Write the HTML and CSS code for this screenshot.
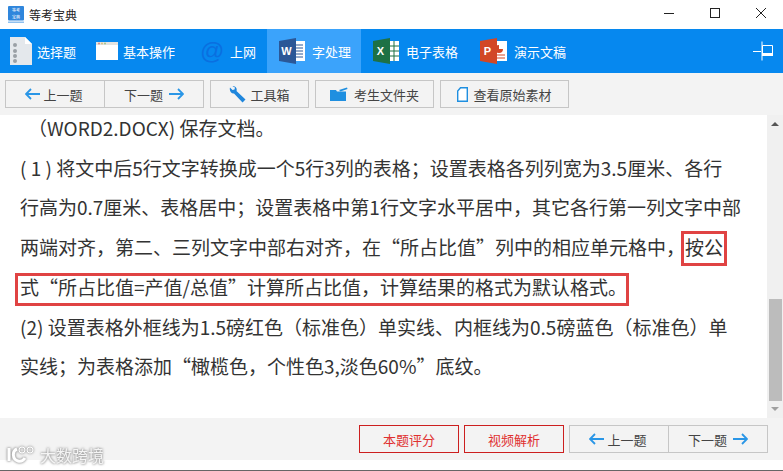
FILE: index.html
```html
<!DOCTYPE html>
<html lang="zh-CN">
<head>
  <meta charset="UTF-8">
  <meta name="viewport" content="width=device-width, initial-scale=1.0">
  <title>等考宝典</title>
  <link rel="stylesheet" href="styles.css">
</head>
<body>
  <div class="app">
    <!-- 标题栏 -->
    <div class="titlebar">
      <svg class="app-icon" viewBox="0 0 16 17">
        <rect width="16" height="14.5" rx="1" fill="#2f86dc"/>
        <rect y="15.5" width="16" height="1.5" fill="#8fc0ee"/>
        <text x="8" y="6" text-anchor="middle" class="app-icon-text">等考</text>
        <text x="8" y="12.5" text-anchor="middle" class="app-icon-text">宝典</text>
      </svg>
      <span class="app-name">等考宝典</span>
      <div class="win-controls">
        <svg class="win-btn" viewBox="0 0 46 29"><path d="M18 13.5h10" stroke="#222" fill="none"/></svg>
        <svg class="win-btn" viewBox="0 0 46 29"><rect x="18.5" y="8.5" width="9" height="9" stroke="#222" fill="none"/></svg>
        <svg class="win-btn" viewBox="0 0 46 29"><path d="M18 8l10 10M28 8l-10 10" stroke="#222" fill="none"/></svg>
      </div>
    </div>

    <!-- 主导航 -->
    <div class="nav">
      <div class="nav-item">
        <svg class="nav-icon" width="22" height="28" viewBox="0 0 22 28">
          <path d="M0 0h15l7 7v21H0z" fill="#e4e8ec"/>
          <path d="M15 0l7 7h-7z" fill="#fff"/>
          <g fill="#9aa0a6"><circle cx="5" cy="8" r="2"/><circle cx="5" cy="14" r="2"/><circle cx="5" cy="19" r="2"/><circle cx="5" cy="24" r="2"/></g>
        </svg>
        <span>选择题</span>
      </div>
      <div class="nav-item">
        <svg class="nav-icon" width="22" height="18" viewBox="0 0 22 18">
          <rect width="22" height="18" fill="#fff"/>
          <rect width="22" height="3" fill="#e3e3e0"/>
          <circle cx="3" cy="1.5" r="1" fill="#d98a80"/><circle cx="6" cy="1.5" r="1" fill="#d9c080"/><circle cx="9" cy="1.5" r="1" fill="#9cc58c"/>
        </svg>
        <span>基本操作</span>
      </div>
      <div class="nav-item nav-item-web">
        <span class="at-icon">@</span>
        <span>上网</span>
      </div>
      <div class="nav-item nav-item-office active">
        <svg class="nav-icon" width="26" height="26" viewBox="0 0 26 26">
          <rect x="12" y="3" width="14" height="20" fill="#fff"/>
          <path d="M15 7h9M15 10h9M15 13h9M15 16h9M15 19h9" stroke="#2b5797" fill="none"/>
          <path d="M0 3l17-3v26L0 23z" fill="#2b5797"/>
          <text x="7.5" y="17" text-anchor="middle" class="office-letter">W</text>
        </svg>
        <span>字处理</span>
      </div>
      <div class="nav-item nav-item-office">
        <svg class="nav-icon" width="26" height="26" viewBox="0 0 26 26">
          <rect x="12" y="3" width="14" height="20" fill="#fff"/>
          <path d="M16 3v20M21 3v20M13 8h13M13 13h13M13 18h13" stroke="#1e7145" fill="none"/>
          <path d="M0 3l17-3v26L0 23z" fill="#1e7145"/>
          <text x="7.5" y="17" text-anchor="middle" class="office-letter">X</text>
        </svg>
        <span>电子表格</span>
      </div>
      <div class="nav-item nav-item-office">
        <svg class="nav-icon" width="27" height="26" viewBox="0 0 27 26">
          <rect x="12" y="3" width="15" height="20" fill="#fff"/>
          <path d="M19 7a4 4 0 1 0 4 4h-4z" fill="#d24726"/>
          <path d="M15 17h10M15 20h10" stroke="#d24726" fill="none"/>
          <path d="M0 3l17-3v26L0 23z" fill="#d24726"/>
          <text x="7.5" y="17" text-anchor="middle" class="office-letter">P</text>
        </svg>
        <span>演示文稿</span>
      </div>
      <svg class="pin" width="21" height="20" viewBox="0 0 21 20">
        <path d="M0 10.500h8M9 .5v19" stroke="#fff" fill="none"/>
        <path d="M9.500 4.500h10v10h-10z" stroke="#fff" fill="none"/>
        <rect x="9" y="12" width="11" height="3" fill="#fff"/>
      </svg>
    </div>

    <!-- 工具栏 -->
    <div class="toolbar">
      <div class="btn-group">
        <button class="btn btn-prev">
          <svg class="arrow" viewBox="0 0 15 12"><path d="M6 1L1 6l5 5M1 6h14" stroke="#2a96e6" stroke-width="1.800" fill="none"/></svg>
          上一题
        </button>
        <button class="btn btn-next">
          下一题
          <svg class="arrow" viewBox="0 0 15 12"><path d="M9 1l5 5-5 5M14 6H0" stroke="#2a96e6" stroke-width="1.800" fill="none"/></svg>
        </button>
      </div>
      <button class="btn btn-tools">
        <svg width="17" height="17" viewBox="0 0 17 17"><path d="M1 1.500L3.500 4 5.500 3.500 6 1.500 3.500 0.500C6 -0.500 8.500 2 7.500 5L16.500 13.500 13.500 16.500 5 7.500C2.500 8 0 5 1 1.500z" fill="#1f86dc"/></svg>
        工具箱
      </button>
      <button class="btn btn-folder">
        <svg width="18" height="14" viewBox="0 0 18 14"><path d="M0 3h6l1 1.500h9V14H0z" fill="#1f8fe0"/><path d="M9 3l8-2.500.5 1.500-7 2.500z" fill="#1f8fe0"/></svg>
        考生文件夹
      </button>
      <button class="btn btn-source">
        <svg width="11" height="15" viewBox="0 0 11 15"><path d="M3.500.7h6.800v13.600H.7V4z" fill="#fff" stroke="#1f8fe0" stroke-width="1.400"/></svg>
        查看原始素材
      </button>
    </div>

    <!-- 题目内容 -->
    <div class="content">
      <div class="question">
        <p class="indent">（WORD2.DOCX) 保存文档。</p>
        <p>( 1 ) 将文中后5行文字转换成一个5行3列的表格；设置表格各列列宽为3.5厘米、各行<br>行高为0.7厘米、表格居中；设置表格中第1行文字水平居中，其它各行第一列文字中部<br>两端对齐，第二、三列文字中部右对齐，在“所占比值”列中的相应单元格中，按公<br>式“所占比值=产值/总值”计算所占比值，计算结果的格式为默认格式。</p>
        <p>(2) 设置表格外框线为1.5磅红色（标准色）单实线、内框线为0.5磅蓝色（标准色）单<br>实线；为表格添加“橄榄色，个性色3,淡色60%”底纹。</p>
      </div>
      <div class="mark mark-a"></div>
      <div class="mark mark-b"></div>
      <div class="scrollbar">
        <span class="scroll-up"></span>
        <div class="scroll-track"><div class="scroll-thumb"></div></div>
        <span class="scroll-down"></span>
      </div>
    </div>

    <!-- 底部按钮 -->
    <div class="footer">
      <button class="btn btn-red">本题评分</button>
      <button class="btn btn-red">视频解析</button>
      <div class="btn-group">
        <button class="btn btn-prev">
          <svg class="arrow" viewBox="0 0 15 12"><path d="M6 1L1 6l5 5M1 6h14" stroke="#2a96e6" stroke-width="1.800" fill="none"/></svg>
          上一题
        </button>
        <button class="btn btn-next">
          下一题
          <svg class="arrow" viewBox="0 0 15 12"><path d="M9 1l5 5-5 5M14 6H0" stroke="#2a96e6" stroke-width="1.800" fill="none"/></svg>
        </button>
      </div>
    </div>

    <div class="bottom-line"></div>

    <div class="watermark">
      <svg width="28" height="18" viewBox="0 0 28 18">
        <path d="M2 2v13M10 3C5 5 5 13 11 15c3 1 5 0 7-3" stroke="#fff" stroke-width="3" fill="none"/>
        <circle cx="15" cy="4" r="3" stroke="#fff" fill="none"/>
        <circle cx="23" cy="4" r="3" stroke="#fff" fill="none"/>
      </svg>
      <span>大数跨境</span>
    </div>
  </div>
</body>
</html>
```

FILE: styles.css
```css
* {
  box-sizing: border-box;
}

html, body {
  margin: 0;
  height: 100%;
  overflow: hidden;
}

body {
  font-family: "Noto Sans CJK SC", "Liberation Sans", sans-serif;
  font-weight: 400;
  color: #333;
  background-color: #fff;
}

.app {
  position: relative;
  height: 471px;
  display: flex;
  flex-direction: column;
}

.titlebar {
  height: 29px;
  display: flex;
  align-items: center;
  padding-left: 8px;
  background-color: #fff;
}

.app-icon {
  width: 16px;
  height: 17px;
}

.app-icon-text {
  font-size: 4px;
  fill: #fff;
}

.app-name {
  font-size: 12px;
  margin-left: 5px;
  color: #222;
}

.win-controls {
  margin-left: auto;
  display: flex;
  margin-right: -1px;
}

.win-btn {
  width: 46px;
  height: 29px;
}

.nav {
  height: 44px;
  display: flex;
  align-items: stretch;
  background-color: #0688ef;
  color: #fff;
  font-size: 13px;
}

.nav-item {
  display: flex;
  align-items: center;
  gap: 5px;
  padding: 0 10px;
}

.nav-item-web {
  gap: 10px;
  padding: 0 11px 0 15px;
}

.nav-item-office {
  gap: 7px;
  padding: 0 10px 0 12px;
}

.nav-item.active {
  background-color: #3ba3fb;
}

.at-icon {
  width: 20px;
  font-family: "Liberation Sans", sans-serif;
  font-size: 24px;
  line-height: 1;
  color: #0a6fe0;
}

.office-letter {
  font-family: "Liberation Sans", sans-serif;
  font-size: 11px;
  font-weight: bold;
  fill: #fff;
}

.pin {
  margin: auto 9px auto auto;
}

.toolbar {
  height: 42px;
  display: flex;
  align-items: flex-start;
  gap: 6px;
  padding: 7px 0 0 5px;
  background-color: #f3f3f3;
}

.btn-group {
  display: flex;
}

.btn {
  height: 28px;
  width: 100px;
  display: flex;
  align-items: center;
  justify-content: center;
  gap: 4px;
  padding: 0;
  font-family: inherit;
  font-size: 13px;
  color: #444;
  background-color: #f3f3f3;
  border: 1px solid #c6c6c6;
}

.btn-prev {
  gap: 3px;
  padding-right: 2px;
}

.btn-next {
  gap: 6px;
  margin-left: -1px;
}

.btn-tools {
  width: 99px;
}

.btn-folder {
  width: 119px;
  gap: 6px;
}

.btn-source {
  width: 129px;
  gap: 5px;
}

.arrow {
  width: 15px;
  height: 12px;
}

.content {
  position: relative;
  flex: 1;
  min-height: 0;
  display: flex;
  background-color: #fff;
}

.question {
  flex: 1;
  padding-left: 20px;
  margin-top: -7px;
  font-size: 19px;
  line-height: 39.7px;
  white-space: nowrap;
  color: #333;
}

.question p {
  margin: 0;
}

.indent {
  text-indent: 8px;
}

.mark {
  position: absolute;
  border: 3px solid #e04343;
}

.mark-a {
  left: 681px;
  top: 116px;
  width: 46px;
  height: 35px;
}

.mark-b {
  left: 15px;
  top: 158px;
  width: 614px;
  height: 33px;
}

.scrollbar {
  width: 16px;
  display: flex;
  flex-direction: column;
  align-items: center;
  background-color: #f0f0f0;
}

.scroll-up {
  margin-top: 7px;
  border: 4px solid transparent;
  border-top: none;
  border-bottom: 4px solid #555;
}

.scroll-track {
  flex: 1;
  width: 100%;
  display: flex;
  flex-direction: column;
  justify-content: flex-end;
  padding: 0 1px 0 2px;
}

.scroll-thumb {
  height: 102px;
  background-color: #bcbcbc;
}

.scroll-down {
  margin: 6px 0 7px;
  border: 4px solid transparent;
  border-bottom: none;
  border-top: 4px solid #a0a0a0;
}

.footer {
  height: 42px;
  display: flex;
  align-items: flex-start;
  justify-content: flex-end;
  gap: 5px;
  padding: 7px 15px 0 0;
  background-color: #f3f3f3;
}

.btn-red {
  color: #e03030;
  border-color: #cc1f1f;
}

.bottom-line {
  margin-top: 10px;
  height: 1px;
  background-color: #666;
}

.watermark {
  position: absolute;
  left: 7px;
  top: 446px;
  display: flex;
  align-items: center;
  gap: 5px;
  font-size: 16px;
  line-height: 18px;
  color: #f4f4f4;
  filter: drop-shadow(0 0 1px #999) drop-shadow(0 0 1px #bbb);
}
```
